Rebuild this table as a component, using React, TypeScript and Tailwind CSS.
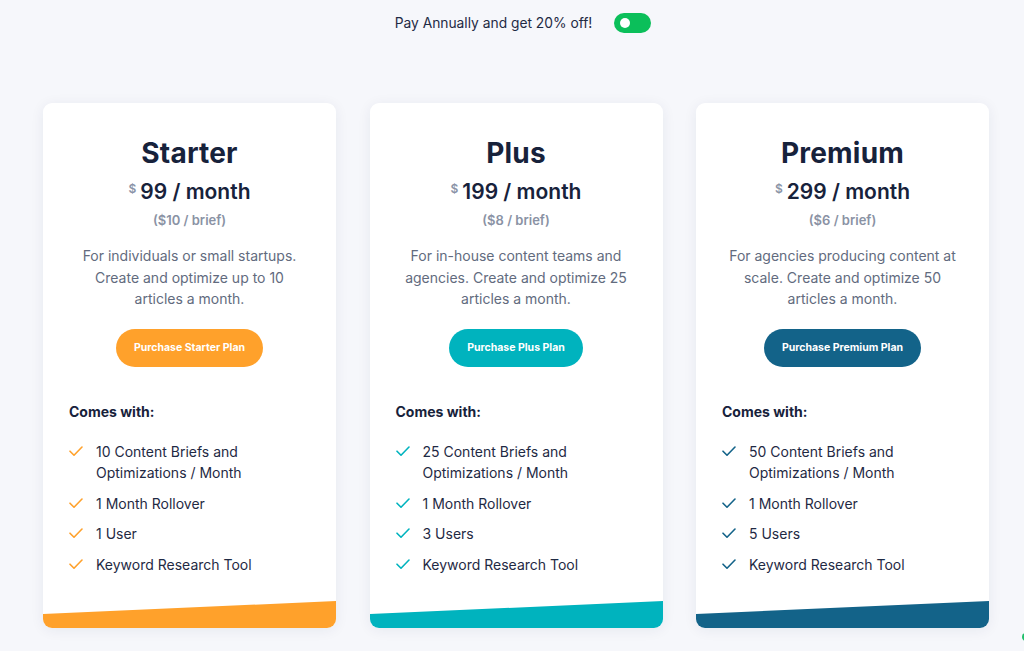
import React from "react";

type Plan = {
  name: string;
  price: string;
  brief: string;
  desc: string[];
  button: string;
  color: string;
  features: string[][];
};

const plans: Plan[] = [
  {
    name: "Starter",
    price: "99",
    brief: "($10 / brief)",
    desc: ["For individuals or small startups.", "Create and optimize up to 10", "articles a month."],
    button: "Purchase Starter Plan",
    color: "#ffa12b",
    features: [["10 Content Briefs and", "Optimizations / Month"], ["1 Month Rollover"], ["1 User"], ["Keyword Research Tool"]],
  },
  {
    name: "Plus",
    price: "199",
    brief: "($8 / brief)",
    desc: ["For in-house content teams and", "agencies. Create and optimize 25", "articles a month."],
    button: "Purchase Plus Plan",
    color: "#00b3be",
    features: [["25 Content Briefs and", "Optimizations / Month"], ["1 Month Rollover"], ["3 Users"], ["Keyword Research Tool"]],
  },
  {
    name: "Premium",
    price: "299",
    brief: "($6 / brief)",
    desc: ["For agencies producing content at", "scale. Create and optimize 50", "articles a month."],
    button: "Purchase Premium Plan",
    color: "#136389",
    features: [["50 Content Briefs and", "Optimizations / Month"], ["1 Month Rollover"], ["5 Users"], ["Keyword Research Tool"]],
  },
];

function Check({ color }: { color: string }) {
  return (
    <svg width="14" height="11" viewBox="0 0 14 11" fill="none" className="shrink-0 mt-[5px]">
      <path d="M1 5.2L5 9.2L13 1" stroke={color} strokeWidth="1.6" strokeLinecap="round" strokeLinejoin="round" />
    </svg>
  );
}

function Card({ p }: { p: Plan }) {
  return (
    <div className="relative w-[293px] h-[525px] bg-white rounded-[9px] shadow-[0_2px_14px_rgba(30,40,80,0.07)] overflow-hidden flex flex-col">
      <div className="flex flex-col items-center pt-[33px]">
        <div className="text-[28px] leading-[34px] font-bold text-[#17223b] tracking-[0.2px]">{p.name}</div>
        <div className="mt-[9px] flex items-start text-[#17223b]">
          <span className="text-[12px] leading-[14px] font-semibold text-[#8a93a6] mt-[3px] mr-[4px]">$</span>
          <span className="text-[21px] leading-[26px] font-semibold">{p.price} / month</span>
        </div>
        <div className="mt-[7px] text-[13px] leading-[16px] font-semibold text-[#8a92a4]">{p.brief}</div>
        <div className="mt-[17px] text-[14px] leading-[21.5px] text-[#626b7e] text-center">
          {p.desc.map((d) => (
            <div key={d}>{d}</div>
          ))}
        </div>
        <button
          className="mt-[19px] h-[38px] px-[18px] rounded-full text-white text-[10.5px] font-bold"
          style={{ backgroundColor: p.color }}
        >
          {p.button}
        </button>
      </div>
      <div className="pl-[26px] pt-[36px]">
        <div className="text-[14px] leading-[18px] font-bold text-[#17223b]">Comes with:</div>
        <div className="mt-[20px] flex flex-col gap-[9px]">
          {p.features.map((f) => (
            <div key={f[0]} className="flex items-start gap-[13px]">
              <Check color={p.color} />
              <div className="text-[14px] leading-[21.5px] text-[#1f2a44]">
                {f.map((l) => (
                  <div key={l}>{l}</div>
                ))}
              </div>
            </div>
          ))}
        </div>
      </div>
      <svg className="absolute left-0 bottom-0" width="293" height="27" viewBox="0 0 293 27" preserveAspectRatio="none">
        <polygon points="0,13 293,0 293,27 0,27" fill={p.color} />
      </svg>
    </div>
  );
}

export default function App() {
  return (
    <div className="relative w-[1024px] h-[651px] overflow-hidden bg-[#f6f7fb]" style={{ fontFamily: "Inter, 'Noto Sans', sans-serif" }}>
      <div className="flex items-center justify-center gap-[22px] pt-[12px] pl-[22px]">
        <span className="text-[13.8px] leading-[22px] text-[#1f2a44]">Pay Annually and get 20% off!</span>
        <div className="w-[37px] h-[20px] rounded-full bg-[#0bbf5a] flex items-center pl-[6px]">
          <div className="w-[10px] h-[10px] rounded-full bg-white" />
        </div>
      </div>
      <div className="flex gap-[33.5px] pl-[43px] pt-[69px]">
        {plans.map((p) => (
          <Card key={p.name} p={p} />
        ))}
      </div>
      <div className="absolute right-[-6px] bottom-[10px] w-[8px] h-[8px] rounded-full bg-[#1fbf6a]" />
    </div>
  );
}
